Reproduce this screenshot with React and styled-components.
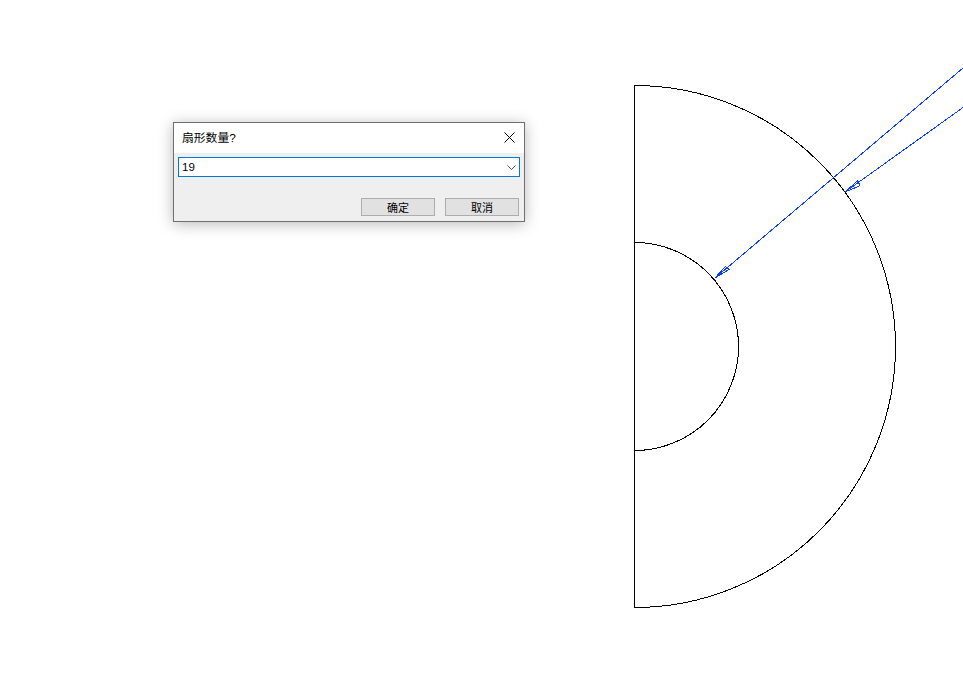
import styled, { createGlobalStyle } from 'styled-components';

const GlobalStyle = createGlobalStyle`
    html, body {
        margin: 0;
        padding: 0;
        background: #fff;
    }
    body {
        font-family: "Liberation Sans", "Noto Sans CJK SC", sans-serif;
        font-size: 12px;
    }
`;

const Canvas = styled.div`
    position: relative;
    width: 963px;
    height: 697px;
    overflow: hidden;
    background: #fff;
`;

const Drawing = styled.svg`
    position: absolute;
    top: 0;
    left: 0;
    shape-rendering: crispEdges;
`;

const Dialog = styled.div`
    position: absolute;
    left: 173px;
    top: 122px;
    width: 350px;
    height: 98px;
    display: flex;
    flex-direction: column;
    background: #efefef;
    border: 1px solid #6f6f6f;
    box-shadow: 0 2px 14px rgba(0, 0, 0, 0.28);
`;

const TitleBar = styled.div`
    height: 28px;
    display: flex;
    align-items: center;
    justify-content: space-between;
    padding: 0 8px 2px;
    background: #fff;
    color: #000;
    font-size: 12px;
`;

const Title = styled.span`
    margin-bottom: 1px;
    font-size: 11.8px;
`;

const CloseButton = styled.button`
    display: flex;
    padding: 0;
    border: 0;
    background: none;
    margin-right: 1px;
`;

const Body = styled.div`
    flex: 1;
    display: flex;
    flex-direction: column;
    padding: 4px 4px 5px 4px;
`;

const Combo = styled.div`
    height: 20px;
    box-sizing: border-box;
    display: flex;
    align-items: center;
    justify-content: space-between;
    border: 1px solid #0078d7;
    background: #fff;
    padding: 0 3px;
    color: #000;
    font-size: 11.5px;
`;

const Footer = styled.div`
    margin-top: auto;
    display: flex;
    justify-content: flex-end;
    gap: 10px;
    padding-right: 1px;
`;

const Button = styled.button`
    width: 74px;
    height: 18px;
    box-sizing: border-box;
    padding: 0;
    border: 1px solid #adadad;
    background: #e1e1e1;
    color: #000;
    font-family: "Noto Sans CJK SC", sans-serif;
    font-size: 11px;
    line-height: 1;
`;

const App = () => {
    return (
        <Canvas>
            <GlobalStyle />
            <Drawing width="963" height="697" viewBox="0 0 963 697">
                <g fill="none" stroke="#000" strokeWidth="1">
                    <path d="M634.5 85 V607.5" />
                    <path d="M634.5 85.5 A261 261 0 0 1 634.5 607.5" />
                    <path d="M634.5 242.5 A104 104 0 0 1 634.5 450.5" />
                </g>
                <g fill="none" stroke="#0a3cff" strokeWidth="1">
                    <path d="M963 68 L715 278 L725.5 266.5 L729 269.5 L715 278" />
                    <path d="M963 107.5 L845 192 L857.7 180.7 L860 185.7 L845 192" />
                </g>
            </Drawing>
            <Dialog>
                <TitleBar>
                    <Title>扇形数量?</Title>
                    <CloseButton type="button">
                        <svg width="11" height="11" viewBox="0 0 11 11">
                            <path d="M0.5 0.5 L10.5 10.5 M10.5 0.5 L0.5 10.5" stroke="#000" strokeWidth="1" fill="none" />
                        </svg>
                    </CloseButton>
                </TitleBar>
                <Body>
                    <Combo>
                        <span>19</span>
                        <svg width="9" height="5" viewBox="0 0 9 5">
                            <path d="M0.5 0.5 L4.5 4.5 L8.5 0.5" stroke="#555" strokeWidth="1" fill="none" />
                        </svg>
                    </Combo>
                    <Footer>
                        <Button type="button">确定</Button>
                        <Button type="button">取消</Button>
                    </Footer>
                </Body>
            </Dialog>
        </Canvas>
    );
};

export default App;
